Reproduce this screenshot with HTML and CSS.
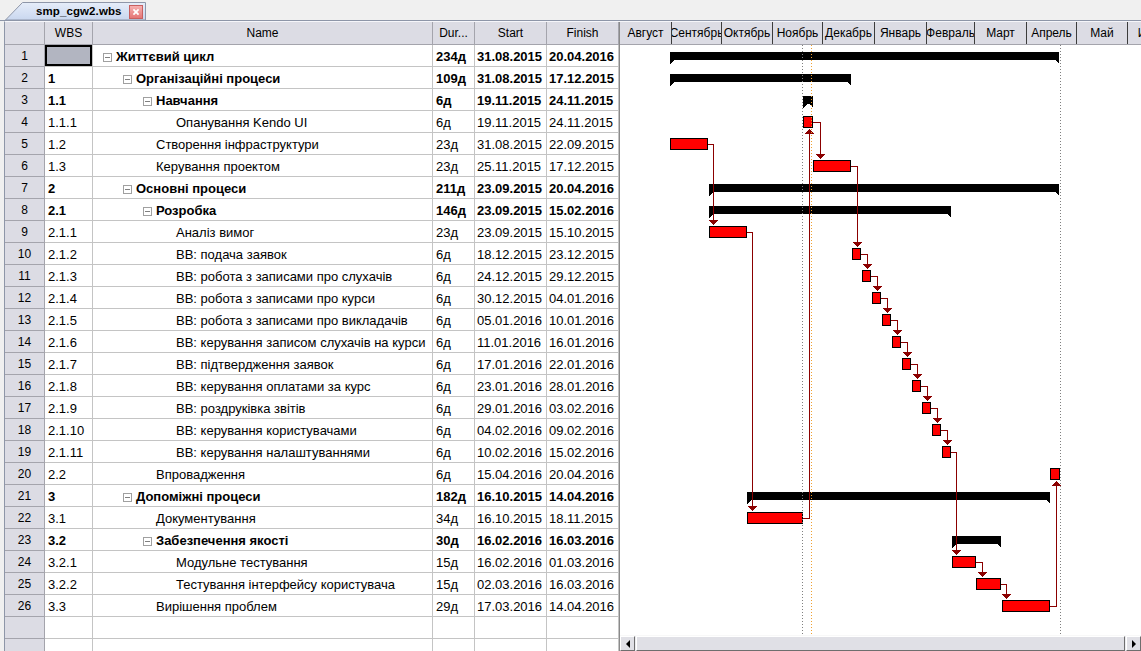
FILE: index.html
```html
<!DOCTYPE html>
<html lang="uk">
<head>
<meta charset="utf-8">
<title>smp_cgw2.wbs</title>
<link rel="stylesheet" href="styles.css">
</head>
<body>
<div class="tabbar">
  <div class="tab">
    <svg class="tab-shape" viewBox="0 0 141 18" width="141" height="18">
      <defs>
        <linearGradient id="tabg" x1="0" y1="0" x2="0" y2="1">
          <stop offset="0" stop-color="#e6edf9"/>
          <stop offset="1" stop-color="#c9d7ef"/>
        </linearGradient>
      </defs>
      <polygon points="0.5,18 17.5,0.5 140.5,0.5 140.5,18" fill="url(#tabg)" stroke="#8e96a8"/>
    </svg>
    <span class="tab-title">smp_cgw2.wbs</span>
    <span class="tab-close"><svg viewBox="0 0 14 14" width="14" height="14"><path d="M4 4L10 10M10 4L4 10" stroke="#fff" stroke-width="2"/></svg></span>
  </div>
</div>
<div class="main">
  <div class="grid">
    <div class="c h"></div><div class="c h">WBS</div><div class="c h">Name</div><div class="c h">Dur...</div><div class="c h">Start</div><div class="c h">Finish</div>

    <div class="row b"><div class="c n">1</div><div class="c sel"></div><div class="c d0"><span class="tog"></span>Життєвий цикл</div><div class="c">234д</div><div class="c dt">31.08.2015</div><div class="c dt">20.04.2016</div></div>
    <div class="row b"><div class="c n">2</div><div class="c">1</div><div class="c d1"><span class="tog"></span>Організаційні процеси</div><div class="c">109д</div><div class="c dt">31.08.2015</div><div class="c dt">17.12.2015</div></div>
    <div class="row b"><div class="c n">3</div><div class="c">1.1</div><div class="c d2"><span class="tog"></span>Навчання</div><div class="c">6д</div><div class="c dt">19.11.2015</div><div class="c dt">24.11.2015</div></div>
    <div class="row"><div class="c n">4</div><div class="c">1.1.1</div><div class="c d3">Опанування Kendo UI</div><div class="c">6д</div><div class="c dt">19.11.2015</div><div class="c dt">24.11.2015</div></div>
    <div class="row"><div class="c n">5</div><div class="c">1.2</div><div class="c d2">Створення інфраструктури</div><div class="c">23д</div><div class="c dt">31.08.2015</div><div class="c dt">22.09.2015</div></div>
    <div class="row"><div class="c n">6</div><div class="c">1.3</div><div class="c d2">Керування проектом</div><div class="c">23д</div><div class="c dt">25.11.2015</div><div class="c dt">17.12.2015</div></div>
    <div class="row b"><div class="c n">7</div><div class="c">2</div><div class="c d1"><span class="tog"></span>Основні процеси</div><div class="c">211д</div><div class="c dt">23.09.2015</div><div class="c dt">20.04.2016</div></div>
    <div class="row b"><div class="c n">8</div><div class="c">2.1</div><div class="c d2"><span class="tog"></span>Розробка</div><div class="c">146д</div><div class="c dt">23.09.2015</div><div class="c dt">15.02.2016</div></div>
    <div class="row"><div class="c n">9</div><div class="c">2.1.1</div><div class="c d3">Аналіз вимог</div><div class="c">23д</div><div class="c dt">23.09.2015</div><div class="c dt">15.10.2015</div></div>
    <div class="row"><div class="c n">10</div><div class="c">2.1.2</div><div class="c d3">ВВ: подача заявок</div><div class="c">6д</div><div class="c dt">18.12.2015</div><div class="c dt">23.12.2015</div></div>
    <div class="row"><div class="c n">11</div><div class="c">2.1.3</div><div class="c d3">ВВ: робота з записами про слухачів</div><div class="c">6д</div><div class="c dt">24.12.2015</div><div class="c dt">29.12.2015</div></div>
    <div class="row"><div class="c n">12</div><div class="c">2.1.4</div><div class="c d3">ВВ: робота з записами про курси</div><div class="c">6д</div><div class="c dt">30.12.2015</div><div class="c dt">04.01.2016</div></div>
    <div class="row"><div class="c n">13</div><div class="c">2.1.5</div><div class="c d3">ВВ: робота з записами про викладачів</div><div class="c">6д</div><div class="c dt">05.01.2016</div><div class="c dt">10.01.2016</div></div>
    <div class="row"><div class="c n">14</div><div class="c">2.1.6</div><div class="c d3">ВВ: керування записом слухачів на курси</div><div class="c">6д</div><div class="c dt">11.01.2016</div><div class="c dt">16.01.2016</div></div>
    <div class="row"><div class="c n">15</div><div class="c">2.1.7</div><div class="c d3">ВВ: підтвердження заявок</div><div class="c">6д</div><div class="c dt">17.01.2016</div><div class="c dt">22.01.2016</div></div>
    <div class="row"><div class="c n">16</div><div class="c">2.1.8</div><div class="c d3">ВВ: керування оплатами за курс</div><div class="c">6д</div><div class="c dt">23.01.2016</div><div class="c dt">28.01.2016</div></div>
    <div class="row"><div class="c n">17</div><div class="c">2.1.9</div><div class="c d3">ВВ: роздруківка звітів</div><div class="c">6д</div><div class="c dt">29.01.2016</div><div class="c dt">03.02.2016</div></div>
    <div class="row"><div class="c n">18</div><div class="c">2.1.10</div><div class="c d3">ВВ: керування користувачами</div><div class="c">6д</div><div class="c dt">04.02.2016</div><div class="c dt">09.02.2016</div></div>
    <div class="row"><div class="c n">19</div><div class="c">2.1.11</div><div class="c d3">ВВ: керування налаштуваннями</div><div class="c">6д</div><div class="c dt">10.02.2016</div><div class="c dt">15.02.2016</div></div>
    <div class="row"><div class="c n">20</div><div class="c">2.2</div><div class="c d2">Впровадження</div><div class="c">6д</div><div class="c dt">15.04.2016</div><div class="c dt">20.04.2016</div></div>
    <div class="row b"><div class="c n">21</div><div class="c">3</div><div class="c d1"><span class="tog"></span>Допоміжні процеси</div><div class="c">182д</div><div class="c dt">16.10.2015</div><div class="c dt">14.04.2016</div></div>
    <div class="row"><div class="c n">22</div><div class="c">3.1</div><div class="c d2">Документування</div><div class="c">34д</div><div class="c dt">16.10.2015</div><div class="c dt">18.11.2015</div></div>
    <div class="row b"><div class="c n">23</div><div class="c">3.2</div><div class="c d2"><span class="tog"></span>Забезпечення якості</div><div class="c">30д</div><div class="c dt">16.02.2016</div><div class="c dt">16.03.2016</div></div>
    <div class="row"><div class="c n">24</div><div class="c">3.2.1</div><div class="c d3">Модульне тестування</div><div class="c">15д</div><div class="c dt">16.02.2016</div><div class="c dt">01.03.2016</div></div>
    <div class="row"><div class="c n">25</div><div class="c">3.2.2</div><div class="c d3">Тестування інтерфейсу користувача</div><div class="c">15д</div><div class="c dt">02.03.2016</div><div class="c dt">16.03.2016</div></div>
    <div class="row"><div class="c n">26</div><div class="c">3.3</div><div class="c d2">Вирішення проблем</div><div class="c">29д</div><div class="c dt">17.03.2016</div><div class="c dt">14.04.2016</div></div>
    <div class="row"><div class="c n"></div><div class="c"></div><div class="c"></div><div class="c"></div><div class="c"></div><div class="c"></div></div>
    <div class="row"><div class="c n"></div><div class="c"></div><div class="c"></div><div class="c"></div><div class="c"></div><div class="c"></div></div>
  </div>
  <div class="splitter"></div>
  <div class="gantt">
    <div class="months">
      <div class="m w51">Август</div>
      <div class="m w50">Сентябрь</div>
      <div class="m w51">Октябрь</div>
      <div class="m w50">Ноябрь</div>
      <div class="m w52">Декабрь</div>
      <div class="m w52">Январь</div>
      <div class="m w48">Февраль</div>
      <div class="m w52">Март</div>
      <div class="m w50">Апрель</div>
      <div class="m w51">Май</div>
      <div class="m w51">Июнь</div>
    </div>
    <div class="chart">
      <svg width="521" height="590" viewBox="0 0 521 590" shape-rendering="crispEdges">
        <g class="sum">
          <polygon points="50,7 439,7 439,19 435,15 54,15 50,19"/>
          <polygon points="50,29 231,29 231,41 227,37 54,37 50,41"/>
          <polygon points="183,51 193,51 193,63 189,59 187,59 183,63"/>
          <polygon points="89,139 439,139 439,151 435,147 93,147 89,151"/>
          <polygon points="89,161 331,161 331,173 327,169 93,169 89,173"/>
          <polygon points="127,447 430,447 430,459 426,455 131,455 127,459"/>
          <polygon points="332,491 381,491 381,503 377,499 336,499 332,503"/>
        </g>
        <g class="task">
          <rect x="183.5" y="71.5" width="9" height="11"/>
          <rect x="50.5" y="93.5" width="37" height="11"/>
          <rect x="193.5" y="115.5" width="37" height="11"/>
          <rect x="89.5" y="181.5" width="37" height="11"/>
          <rect x="232.5" y="203.5" width="8" height="11"/>
          <rect x="242.5" y="225.5" width="8" height="11"/>
          <rect x="252.5" y="247.5" width="8" height="11"/>
          <rect x="262.5" y="269.5" width="8" height="11"/>
          <rect x="272.5" y="291.5" width="8" height="11"/>
          <rect x="282.5" y="313.5" width="8" height="11"/>
          <rect x="292.5" y="335.5" width="8" height="11"/>
          <rect x="302.5" y="357.5" width="8" height="11"/>
          <rect x="312.5" y="379.5" width="8" height="11"/>
          <rect x="322.5" y="401.5" width="8" height="11"/>
          <rect x="430.5" y="423.5" width="9" height="11"/>
          <rect x="127.5" y="467.5" width="55" height="11"/>
          <rect x="332.5" y="511.5" width="23" height="11"/>
          <rect x="356.5" y="533.5" width="24" height="11"/>
          <rect x="382.5" y="555.5" width="47" height="11"/>
        </g>
        <g class="link">
          <path d="M193 77.5H200.5V109"/>
          <path d="M88 99.5H93.5V175"/>
          <path d="M231 121.5H237.5V197"/>
          <path d="M127 187.5H132.5V461"/>
          <path d="M241 209.5H247.5V219"/>
          <path d="M251 231.5H257.5V241"/>
          <path d="M261 253.5H267.5V263"/>
          <path d="M271 275.5H277.5V285"/>
          <path d="M281 297.5H287.5V307"/>
          <path d="M291 319.5H297.5V329"/>
          <path d="M301 341.5H307.5V351"/>
          <path d="M311 363.5H317.5V373"/>
          <path d="M321 385.5H327.5V395"/>
          <path d="M331 407.5H336.5V505"/>
          <path d="M183 473.5H189.5V89"/>
          <path d="M356 517.5H362.5V527"/>
          <path d="M381 539.5H386.5V549"/>
          <path d="M430 561.5H436.5V441"/>
        </g>
        <g class="arrow">
          <polygon points="196,109 205,109 200.5,114"/>
          <polygon points="89,175 98,175 93.5,180"/>
          <polygon points="233,197 242,197 237.5,202"/>
          <polygon points="128,461 137,461 132.5,466"/>
          <polygon points="243,219 252,219 247.5,224"/>
          <polygon points="253,241 262,241 257.5,246"/>
          <polygon points="263,263 272,263 267.5,268"/>
          <polygon points="273,285 282,285 277.5,290"/>
          <polygon points="283,307 292,307 287.5,312"/>
          <polygon points="293,329 302,329 297.5,334"/>
          <polygon points="303,351 312,351 307.5,356"/>
          <polygon points="313,373 322,373 317.5,378"/>
          <polygon points="323,395 332,395 327.5,400"/>
          <polygon points="332,505 341,505 336.5,510"/>
          <polygon points="185,89 194,89 189.5,84"/>
          <polygon points="358,527 367,527 362.5,532"/>
          <polygon points="382,549 391,549 386.5,554"/>
          <polygon points="432,441 441,441 436.5,436"/>
        </g>
        <g class="dots">
          <line x1="182.5" y1="0" x2="182.5" y2="590" class="grey"/>
          <line x1="191.5" y1="0" x2="191.5" y2="590" class="orange"/>
          <line x1="440.5" y1="0" x2="440.5" y2="590" class="grey"/>
        </g>
      </svg>
    </div>
    <div class="hscroll">
      <div class="sb-btn"><span class="arr-l"></span></div>
      <div class="sb-thumb"></div>
      <div class="sb-btn"><span class="arr-r"></span></div>
    </div>
  </div>
</div>
</body>
</html>
```
FILE: styles.css
```css
* { box-sizing: border-box; }
html, body { margin: 0; padding: 0; }
body {
  width: 1141px;
  height: 651px;
  overflow: hidden;
  background: #f0f0f0;
  font-family: "Liberation Sans", Arial, sans-serif;
  font-size: 12px;
  color: #000;
}

/* tab strip */
.tabbar {
  height: 21px;
  padding: 2px 0 0 5px;
  border-bottom: 1px solid #8e96a8;
  display: flex;
}
.tab {
  position: relative;
  width: 141px;
  height: 18px;
  display: flex;
  align-items: center;
  padding: 0 3px 0 31px;
}
.tab-shape { position: absolute; left: 0; top: 0; }
.tab-title {
  position: relative;
  font-weight: bold;
  font-size: 11.5px;
  letter-spacing: 0.1px;
}
.tab-close {
  position: relative;
  margin-left: auto;
  width: 14px;
  height: 14px;
  margin-top: 2px;
  background: linear-gradient(#f6b0b0, #e47676);
  border: 1px solid #c86060;
  display: flex;
  align-items: center;
  justify-content: center;
}
.tab-close svg { display: block; width: 12px; height: 12px; }

/* main pane */
.main {
  display: flex;
  height: 630px;
  margin-left: 4px;
  border-left: 1px solid #8e96a8;
  border-top: 1px solid #f6f6fa;
  background: #fff;
}

/* table */
.grid {
  flex: none;
  width: 614px;
  display: grid;
  grid-template-columns: 40px 48px 340px 42px 72px 72px;
  grid-template-rows: 23px;
  grid-auto-rows: 22px;
  align-content: start;
  overflow: hidden;
}
.row { display: contents; }
.c {
  border-right: 1px solid #c4c4c4;
  border-bottom: 1px solid #c4c4c4;
  font-size: 13px;
  line-height: 21px;
  padding-top: 1px;
  white-space: nowrap;
  overflow: hidden;
  padding-left: 3px;
}
.b .c { font-weight: bold; }
.b .c.n { font-weight: normal; }
.c.h {
  background: #dcdce4;
  border-color: #a4a4ac;
  text-align: center;
  font-size: 12px;
  padding: 0;
  line-height: 22px;
}
.c.n {
  background: #dcdce4;
  border-color: #a4a4ac;
  text-align: center;
  font-size: 12px;
  padding-left: 0;
}
.c.dt { padding-left: 2px; }
.c.sel {
  background: #b2b5c1;
  box-shadow: inset 0 0 0 2px #000;
}
.d0 { padding-left: 23px; }
.d1 { padding-left: 43px; }
.d2 { padding-left: 63px; }
.d3 { padding-left: 83px; }
.tog {
  display: inline-block;
  position: relative;
  width: 9px;
  height: 9px;
  margin-left: -13px;
  margin-right: 4px;
  border: 1px solid #a0a0a0;
  background: #fff;
  vertical-align: -1px;
}
.tog::after {
  content: "";
  position: absolute;
  left: 1px;
  right: 1px;
  top: 3px;
  height: 1px;
  background: #808080;
}

.splitter { flex: none; width: 1px; background: #8a8a8a; }

/* gantt */
.gantt {
  flex: 1;
  min-width: 0;
  display: flex;
  flex-direction: column;
  overflow: hidden;
}
.months {
  flex: none;
  height: 23px;
  display: flex;
  background: #dcdce4;
  border-bottom: 1px solid #a4a4ac;
}
.m {
  flex: none;
  display: flex;
  justify-content: center;
  overflow: hidden;
  white-space: nowrap;
  line-height: 22px;
  border-left: 1px solid #3c3c3c;
}
.m:first-child { border-left: none; }
.w48 { width: 48px; }
.w50 { width: 50px; }
.w51 { width: 51px; }
.w52 { width: 52px; }

.chart { flex: none; height: 590px; background: #fff; }
.chart svg { display: block; }
.sum polygon { fill: #000; }
.task rect { fill: #ff0000; stroke: #000; stroke-width: 1; }
.link path { fill: none; stroke: #8b0000; stroke-width: 1; }
.arrow polygon { fill: #8b0000; }
.dots line { stroke-width: 1; stroke-dasharray: 1 2; }
.dots .grey { stroke: #808080; }
.dots .orange { stroke: #f0a030; }

/* scrollbar */
.hscroll {
  flex: none;
  height: 16px;
  display: flex;
  background: #ececf0;
  border-top: 1px solid #f8f8f8;
}
.sb-btn, .sb-thumb {
  background: #e0e0e6;
  border: 1px solid;
  border-color: #ffffff #6e6e6e #6e6e6e #ffffff;
}
.sb-btn {
  flex: none;
  width: 15px;
  display: flex;
  align-items: center;
  justify-content: center;
}
.sb-thumb { flex: 1; margin: 0 1px; }
.arr-l, .arr-r { width: 0; height: 0; border-top: 4px solid transparent; border-bottom: 4px solid transparent; }
.arr-l { border-right: 4px solid #000; }
.arr-r { border-left: 4px solid #000; }
```
